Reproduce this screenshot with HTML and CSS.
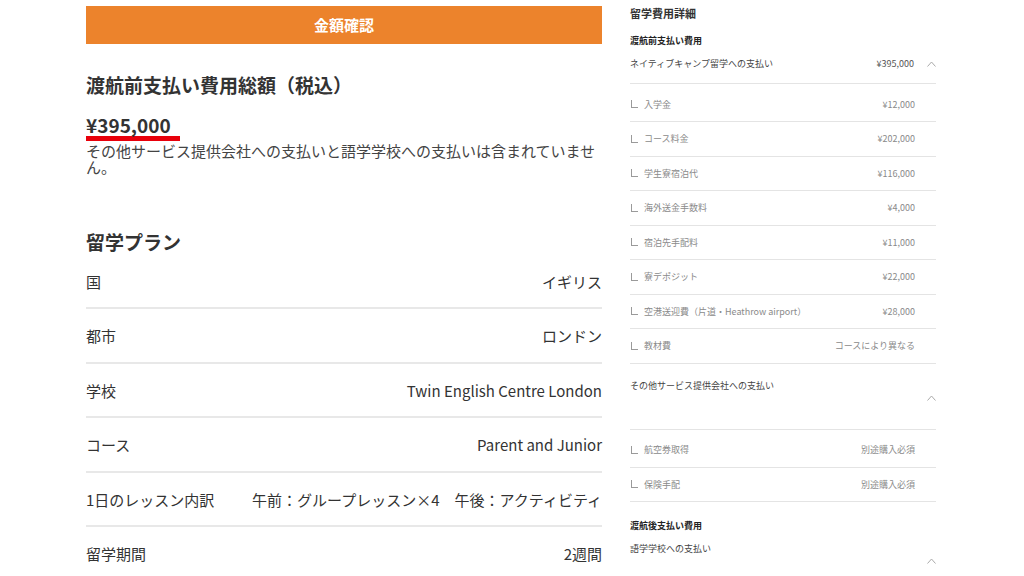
FILE: index.html
```html
<!DOCTYPE html>
<html lang="ja">
<head>
    <meta charset="UTF-8">
    <meta name="viewport" content="width=device-width, initial-scale=1.0">
    <title>金額確認</title>
    <link rel="stylesheet" href="styles.css">
</head>
<body>
    <div class="page">
        <!-- Left: summary and plan -->
        <div class="main-col">
            <div class="confirm-bar">金額確認</div>

            <h2 class="total-title">渡航前支払い費用総額（税込）</h2>
            <div class="total-amount">¥395,000</div>
            <p class="total-note">その他サービス提供会社への支払いと語学学校への支払いは含まれていません。</p>

            <h2 class="plan-title">留学プラン</h2>
            <div class="plan-list">
                <div class="plan-row"><span>国</span><span>イギリス</span></div>
                <div class="plan-row"><span>都市</span><span>ロンドン</span></div>
                <div class="plan-row"><span>学校</span><span>Twin English Centre London</span></div>
                <div class="plan-row"><span>コース</span><span>Parent and Junior</span></div>
                <div class="plan-row"><span>1日のレッスン内訳</span><span>午前：グループレッスン×4　午後：アクティビティ</span></div>
                <div class="plan-row"><span>留学期間</span><span>2週間</span></div>
            </div>
        </div>

        <!-- Right: cost breakdown -->
        <div class="side-col">
            <h3 class="side-title">留学費用詳細</h3>

            <div class="group-label">渡航前支払い費用</div>
            <div class="main-row">
                <span class="main-label">ネイティブキャンプ留学への支払い</span>
                <span class="main-amount">¥395,000</span>
                <svg class="chevron" width="9" height="6" viewBox="0 0 9 6"><polyline points="0.5,5.5 4.5,1 8.5,5.5" fill="none" stroke="#aaa" stroke-width="1"/></svg>
            </div>
            <div class="sub-list">
                <div class="sub-row"><span class="corner"></span><span class="sub-label">入学金</span><span class="sub-amount">¥12,000</span></div>
                <div class="sub-row"><span class="corner"></span><span class="sub-label">コース料金</span><span class="sub-amount">¥202,000</span></div>
                <div class="sub-row"><span class="corner"></span><span class="sub-label">学生寮宿泊代</span><span class="sub-amount">¥116,000</span></div>
                <div class="sub-row"><span class="corner"></span><span class="sub-label">海外送金手数料</span><span class="sub-amount">¥4,000</span></div>
                <div class="sub-row"><span class="corner"></span><span class="sub-label">宿泊先手配料</span><span class="sub-amount">¥11,000</span></div>
                <div class="sub-row"><span class="corner"></span><span class="sub-label">寮デポジット</span><span class="sub-amount">¥22,000</span></div>
                <div class="sub-row"><span class="corner"></span><span class="sub-label">空港送迎費（片道・Heathrow airport）</span><span class="sub-amount">¥28,000</span></div>
                <div class="sub-row"><span class="corner"></span><span class="sub-label">教材費</span><span class="sub-amount">コースにより異なる</span></div>
            </div>

            <div class="main-row stacked">
                <span class="main-label">その他サービス提供会社への支払い</span>
                <svg class="chevron" width="9" height="6" viewBox="0 0 9 6"><polyline points="0.5,5.5 4.5,1 8.5,5.5" fill="none" stroke="#aaa" stroke-width="1"/></svg>
            </div>
            <div class="sub-list">
                <div class="sub-row"><span class="corner"></span><span class="sub-label">航空券取得</span><span class="sub-amount">別途購入必須</span></div>
                <div class="sub-row"><span class="corner"></span><span class="sub-label">保険手配</span><span class="sub-amount">別途購入必須</span></div>
            </div>

            <div class="group-label after">渡航後支払い費用</div>
            <div class="main-row stacked last">
                <span class="main-label">語学学校への支払い</span>
                <svg class="chevron" width="9" height="6" viewBox="0 0 9 6"><polyline points="0.5,5.5 4.5,1 8.5,5.5" fill="none" stroke="#aaa" stroke-width="1"/></svg>
            </div>
        </div>
    </div>
</body>
</html>
```

FILE: styles.css
```css
/* Reset */
* {
    margin: 0;
    padding: 0;
    box-sizing: border-box;
}

body {
    font-family: "Noto Sans CJK JP", "Noto Sans", sans-serif;
    background: #fff;
    color: #333;
    overflow: hidden;
}

.page {
    display: flex;
    gap: 28px;
    padding-left: 86px;
}

/* Left column */
.main-col {
    width: 516px;
}

.confirm-bar {
    margin-top: 6px;
    height: 38px;
    line-height: 38px;
    background: #ec832c;
    color: #fff;
    text-align: center;
    font-size: 15px;
    font-weight: bold;
}

.total-title {
    margin-top: 27px;
    font-size: 19px;
    line-height: 28px;
    font-weight: bold;
    color: #333;
}

.total-amount {
    display: inline-block;
    margin-top: 16px;
    padding: 0 9px 1px 0;
    font-size: 19px;
    line-height: 20px;
    font-weight: bold;
    border-bottom: 5px solid #e8000b;
}

.total-note {
    margin-top: 2px;
    font-size: 15px;
    line-height: 16px;
    color: #444;
}

.plan-title {
    margin-top: 54px;
    font-size: 19px;
    line-height: 26px;
    font-weight: bold;
}

.plan-row {
    display: flex;
    justify-content: space-between;
    padding: 15px 0 13.4px;
    font-size: 15px;
    line-height: 24px;
    color: #333;
    border-bottom: 2px solid #e8e8e8;
}

/* Right column */
.side-col {
    width: 306px;
    padding-top: 5px;
}

.side-title {
    font-size: 11px;
    line-height: 16px;
    font-weight: bold;
    color: #333;
}

.group-label {
    margin-top: 13px;
    font-size: 9px;
    line-height: 14px;
    font-weight: bold;
    color: #222;
}

.group-label.after {
    margin-top: 17px;
}

.main-row {
    display: flex;
    align-items: center;
    padding: 8px 0 11px;
    font-size: 9px;
    line-height: 16px;
    color: #444;
    border-bottom: 1px solid #e4e4e4;
}

.main-label {
    flex: 1;
}

.main-amount {
    color: #555;
    margin-right: 13px;
}

.chevron {
    display: block;
}

.main-row.stacked {
    flex-direction: column;
    align-items: stretch;
    padding-top: 14px;
    padding-bottom: 28px;
}

.main-row.stacked .chevron {
    align-self: flex-end;
    margin-top: 1px;
}

.main-row.last {
    padding-top: 8px;
    border-bottom: none;
}

.sub-list {
    padding-top: 3.5px;
}

.sub-row {
    display: flex;
    align-items: center;
    padding: 9px 21px 8.5px 1px;
    font-size: 9px;
    line-height: 16px;
    color: #8a8a8a;
    border-bottom: 1px solid #e4e4e4;
}

.corner {
    width: 7px;
    height: 8px;
    margin-right: 6px;
    margin-top: -1px;
    border-left: 1px solid #9a9a9a;
    border-bottom: 1px solid #9a9a9a;
}

.sub-label {
    flex: 1;
}
```
